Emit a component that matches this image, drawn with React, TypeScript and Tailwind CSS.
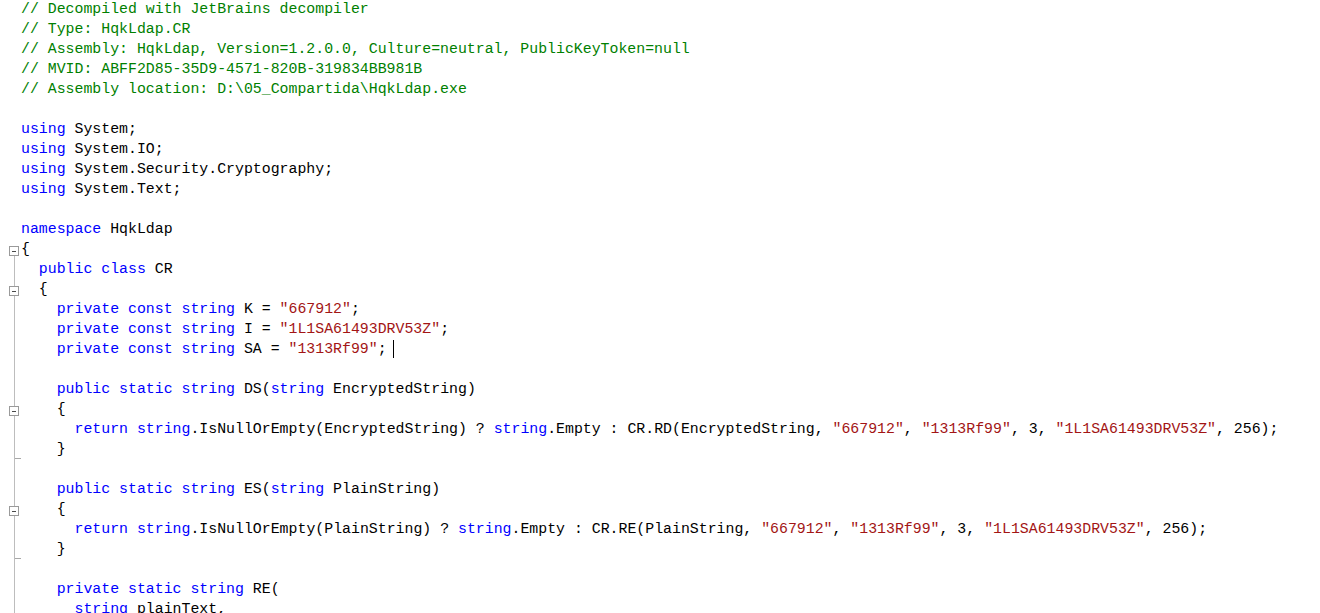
import React from 'react';

type Seg = [string, 'k' | 's' | 'c' | 't'];
type Gutter = 'none' | 'box' | 'boxTop' | 'line' | 'tick';

const color: Record<Seg[1], string> = {
    k: 'text-[#0000ff]',
    s: 'text-[#a31515]',
    c: 'text-[#008000]',
    t: 'text-black',
};

const q = (v: string): Seg => ['"' + v + '"', 's'];

const lines: { segs: Seg[]; g: Gutter; cursor?: boolean }[] = [
    { segs: [['// Decompiled with JetBrains decompiler', 'c']], g: 'none' },
    { segs: [['// Type: HqkLdap.CR', 'c']], g: 'none' },
    { segs: [['// Assembly: HqkLdap, Version=1.2.0.0, Culture=neutral, PublicKeyToken=null', 'c']], g: 'none' },
    { segs: [['// MVID: ABFF2D85-35D9-4571-820B-319834BB981B', 'c']], g: 'none' },
    { segs: [['// Assembly location: D:\\05_Compartida\\HqkLdap.exe', 'c']], g: 'none' },
    { segs: [], g: 'none' },
    { segs: [['using', 'k'], [' System;', 't']], g: 'none' },
    { segs: [['using', 'k'], [' System.IO;', 't']], g: 'none' },
    { segs: [['using', 'k'], [' System.Security.Cryptography;', 't']], g: 'none' },
    { segs: [['using', 'k'], [' System.Text;', 't']], g: 'none' },
    { segs: [], g: 'none' },
    { segs: [['namespace', 'k'], [' HqkLdap', 't']], g: 'none' },
    { segs: [['{', 't']], g: 'boxTop' },
    { segs: [['  ', 't'], ['public class', 'k'], [' CR', 't']], g: 'line' },
    { segs: [['  {', 't']], g: 'box' },
    { segs: [['    ', 't'], ['private const string', 'k'], [' K = ', 't'], q('667912'), [';', 't']], g: 'line' },
    { segs: [['    ', 't'], ['private const string', 'k'], [' I = ', 't'], q('1L1SA61493DRV53Z'), [';', 't']], g: 'line' },
    { segs: [['    ', 't'], ['private const string', 'k'], [' SA = ', 't'], q('1313Rf99'), [';', 't']], g: 'line', cursor: true },
    { segs: [], g: 'line' },
    { segs: [['    ', 't'], ['public static string', 'k'], [' DS(', 't'], ['string', 'k'], [' EncryptedString)', 't']], g: 'line' },
    { segs: [['    {', 't']], g: 'box' },
    {
        segs: [
            ['      ', 't'], ['return string', 'k'], ['.IsNullOrEmpty(EncryptedString) ? ', 't'], ['string', 'k'],
            ['.Empty : CR.RD(EncryptedString, ', 't'], q('667912'), [', ', 't'], q('1313Rf99'), [', 3, ', 't'],
            q('1L1SA61493DRV53Z'), [', 256);', 't'],
        ],
        g: 'line',
    },
    { segs: [['    }', 't']], g: 'tick' },
    { segs: [], g: 'line' },
    { segs: [['    ', 't'], ['public static string', 'k'], [' ES(', 't'], ['string', 'k'], [' PlainString)', 't']], g: 'line' },
    { segs: [['    {', 't']], g: 'box' },
    {
        segs: [
            ['      ', 't'], ['return string', 'k'], ['.IsNullOrEmpty(PlainString) ? ', 't'], ['string', 'k'],
            ['.Empty : CR.RE(PlainString, ', 't'], q('667912'), [', ', 't'], q('1313Rf99'), [', 3, ', 't'],
            q('1L1SA61493DRV53Z'), [', 256);', 't'],
        ],
        g: 'line',
    },
    { segs: [['    }', 't']], g: 'tick' },
    { segs: [], g: 'line' },
    { segs: [['    ', 't'], ['private static string', 'k'], [' RE(', 't']], g: 'line' },
    { segs: [['      ', 't'], ['string', 'k'], [' plainText,', 't']], g: 'line' },
];

const FoldBox = () => (
    <div className="w-[10px] h-[10px] shrink-0 border border-[#9a9a9a] bg-white flex items-center justify-center">
        <div className="w-[4px] h-px bg-[#4a4a4a]" />
    </div>
);

const GutterCell = ({ g }: { g: Gutter }) => {
    if (g === 'none') return <div className="w-[21px] shrink-0" />;

    if (g === 'box' || g === 'boxTop') {
        return (
            <div className="w-[21px] shrink-0 flex flex-col pl-[9px]">
                <div className={`h-[7px] shrink-0 ml-[5px] w-px ${g === 'box' ? 'bg-[#bdbdbd]' : ''}`} />
                <FoldBox />
                <div className="flex-1 ml-[5px] w-px bg-[#bdbdbd]" />
            </div>
        );
    }

    return (
        <div className="w-[21px] shrink-0 pl-[14px] flex">
            <div className="w-px bg-[#bdbdbd]" />
            {g === 'tick' && (
                <div className="flex flex-col justify-end">
                    <div className="h-px w-[6px] bg-[#a8a8a8]" />
                </div>
            )}
        </div>
    );
};

export default function App() {
    return (
        <div className="w-[1320px] h-[613px] overflow-hidden bg-white">
            <div className="-mt-[1px] font-['Liberation_Mono','DejaVu_Sans_Mono',monospace] text-[14.87px] leading-[20px]">
                {lines.map((line, i) => (
                    <div key={`row-${i}`} className="flex h-[20px]">
                        <GutterCell g={line.g} />
                        <div className="whitespace-pre flex items-center">
                            {line.segs.map(([text, kind], j) => (
                                <span key={`seg-${j}`} className={color[kind]}>
                                    {text}
                                </span>
                            ))}
                            {line.cursor && <span className="inline-block ml-[6px] w-px h-[18px] bg-black" />}
                        </div>
                    </div>
                ))}
            </div>
        </div>
    );
}
